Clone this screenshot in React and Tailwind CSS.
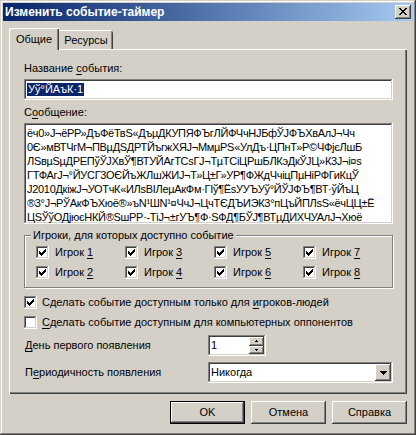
import React from "react";

const raised =
  "shadow-[inset_-1px_-1px_#404040,inset_1px_1px_#ffffff,inset_-2px_-2px_#808080,inset_2px_2px_#d4d0c8]";
const sunken =
  "shadow-[inset_-1px_-1px_#ffffff,inset_1px_1px_#808080,inset_-2px_-2px_#d4d0c8,inset_2px_2px_#404040]";

const font = { fontFamily: '"Liberation Sans", Arial, sans-serif' };

const msgLines = [
  "ёч0»J¬ёРР»ДъФёТвS«ДъµДКУПЯФЪгЛЙФЧчНJБфЎJФЪХвАлJ¬Чч",
  "0Є»мВТЧгМ¬ПВµДSДРТЙъгжХЯJ¬МмµPS«УлДъ·ЦПнТ»Р©ЧФjєЛшБ",
  "ЛSвµSµДРЕПўЎJХвЎ¶ВТУЙАгТСsГJ¬ТµТСіЦРшБЛКэДкЎJЦ»К3J¬і¤s",
  "ГТФАгJ¬°ЙУСГ3ОЄЙъЖЛшЖИJ¬Т»Ц±Г»УР¶ФЖдЧчіцПµНіРФГиКцЎ",
  "J2010ДкіжJ¬УОТчК«ИЛsВІЛеµАкФм·ГІў¶ЁsУУЪУў°ЙЎJФЪ¶ВТ·ўЙъЦ",
  "®3°J¬РЎАкФЪХюё®»ъN¹ШN¹¤ЧчJ¬ЦчТЄДЪИЭК3°пЦъЙПЛsS«ёчЦЦ±Ё",
  "ЦSЎўОДјюєНКЙ®SшРР·-ТіJ¬±гУЪ¶Ф·SФД¶БЎJ¶ВТµДИХЧУАлJ¬Хюё",
];

const Check = ({ checked }) => (
  <div className={`relative h-[13px] w-[13px] shrink-0 bg-white ${sunken}`}>
    {checked && (
      <svg width="13" height="13" className="absolute left-0 top-0" shapeRendering="crispEdges">
        <rect x="9" y="3" width="1" height="1" />
        <rect x="8" y="4" width="2" height="1" />
        <rect x="3" y="5" width="1" height="1" />
        <rect x="7" y="5" width="3" height="1" />
        <rect x="3" y="6" width="2" height="1" />
        <rect x="6" y="6" width="3" height="1" />
        <rect x="3" y="7" width="5" height="1" />
        <rect x="4" y="8" width="3" height="1" />
        <rect x="5" y="9" width="1" height="1" />
      </svg>
    )}
  </div>
);

const U = ({ children }) => <span className="underline underline-offset-[2px]">{children}</span>;

const Player = ({ n }) => (
  <div className="flex h-[13px] items-center gap-[6px]">
    <Check checked />
    <span>
      Игрок <U>{n}</U>
    </span>
  </div>
);

const Btn = ({ children, def }) => (
  <div
    className={`flex h-[23px] w-[75px] items-center justify-center ${
      def ? "border border-black " : ""
    }${raised}`}
  >
    {children}
  </div>
);

export default function App() {
  return (
    <div
      style={font}
      className="flex h-[435px] w-[416px] flex-col bg-[#d4d0c8] p-[3px] text-[11px] leading-[13px] text-black shadow-[inset_-1px_-1px_#404040,inset_1px_1px_#d4d0c8,inset_-2px_-2px_#808080,inset_2px_2px_#ffffff]"
    >
      {/* title bar */}
      <div className="flex h-[18px] items-center justify-between bg-gradient-to-r from-[#0a246a] to-[#a6caf0] pl-[2px] pr-[2px]">
        <span className="text-[12px] font-bold text-white">Изменить событие-таймер</span>
        <div className={`relative h-[14px] w-[16px] bg-[#d4d0c8] ${raised}`}>
          <svg width="16" height="14" className="absolute left-0 top-0" shapeRendering="crispEdges">
            <rect x="4" y="3" width="2" height="1" />
            <rect x="10" y="3" width="2" height="1" />
            <rect x="5" y="4" width="2" height="1" />
            <rect x="9" y="4" width="2" height="1" />
            <rect x="6" y="5" width="4" height="1" />
            <rect x="7" y="6" width="2" height="1" />
            <rect x="6" y="7" width="4" height="1" />
            <rect x="5" y="8" width="2" height="1" />
            <rect x="9" y="8" width="2" height="1" />
            <rect x="4" y="9" width="2" height="1" />
            <rect x="10" y="9" width="2" height="1" />
          </svg>
        </div>
      </div>

      <div className="flex flex-col px-[6px] pt-[7px]">
        {/* tabs */}
        <div className="flex h-[21px] items-end">
          <div className="relative z-10 -mb-[1px] flex h-[22px] w-[50px] items-start justify-center rounded-tl-[2px] bg-[#d4d0c8] pt-[5px] shadow-[inset_1px_1px_#ffffff,inset_-1px_0_#404040,inset_-2px_0_#808080]">
            Общие
          </div>
          <div className="flex h-[19px] w-[54px] items-start justify-center rounded-tr-[2px] pt-[4px] shadow-[inset_0_1px_#ffffff,inset_-1px_0_#404040,inset_-2px_0_#808080]">
            Ресурсы
          </div>
        </div>

        {/* panel */}
        <div className="flex h-[345px] flex-col pl-[15px] pr-[14px] pt-[13px] shadow-[inset_1px_1px_#ffffff,inset_-1px_-1px_#404040,inset_-2px_-2px_#808080]">
          <div className="h-[13px]">
            Название <U>с</U>обытия:
          </div>
          <div className={`mt-[4px] flex h-[21px] items-center bg-white pl-[3px] ${sunken}`}>
            <span className="bg-[#0a246a] px-[1px] text-white">Уў°ЙАъК·1</span>
          </div>

          <div className="mt-[6px] h-[13px]">
            С<U>о</U>общение:
          </div>
          <div className={`mt-[4px] flex h-[101px] flex-col bg-white pl-[3px] pr-[3px] pt-[3px] ${sunken}`}>
            {msgLines.map((l, i) => (
              <div key={i} className="h-[14px] overflow-hidden whitespace-nowrap leading-[14px] tracking-[-0.3px]">
                {l}
              </div>
            ))}
          </div>

          {/* group */}
          <div className="relative mt-[11px] h-[53px] border border-[#808080] pl-[11px] pt-[10px] shadow-[1px_1px_#ffffff,inset_1px_1px_#ffffff]">
            <span className="absolute -top-[7px] left-[6px] bg-[#d4d0c8] px-[2px]">
              Игроки, для которых доступно событие
            </span>
            <div className="grid grid-cols-[89px_89px_89px_89px] gap-y-[7px]">
              <Player n="1" />
              <Player n="3" />
              <Player n="5" />
              <Player n="7" />
              <Player n="2" />
              <Player n="4" />
              <Player n="6" />
              <Player n="8" />
            </div>
          </div>

          <div className="mt-[8px] flex h-[13px] items-center gap-[5px]">
            <Check checked />
            <span>
              Сделать событие доступным только для <U>и</U>гроков-людей
            </span>
          </div>
          <div className="mt-[7px] flex h-[13px] items-center gap-[5px]">
            <Check />
            <span>
              <U>С</U>делать событие доступным для компьютерных оппонентов
            </span>
          </div>

          <div className="mt-[6px] flex h-[21px] items-center">
            <span className="w-[184px] pl-[1px]">
              <U>Д</U>ень первого появления
            </span>
            <div className={`flex h-[21px] w-[58px] bg-white p-[2px] ${sunken}`}>
              <span className="flex-1 pl-[1px] leading-[17px]">1</span>
              <div className="flex w-[15px] flex-col">
                <div className={`flex h-[8.5px] flex-1 items-center justify-center bg-[#d4d0c8] ${raised}`}>
                  <svg width="5" height="3" shapeRendering="crispEdges">
                    <rect x="2" y="0" width="1" height="1" />
                    <rect x="1" y="1" width="3" height="1" />
                  </svg>
                </div>
                <div className={`flex h-[8.5px] flex-1 items-center justify-center bg-[#d4d0c8] ${raised}`}>
                  <svg width="5" height="3" shapeRendering="crispEdges">
                    <rect x="1" y="1" width="3" height="1" />
                    <rect x="2" y="2" width="1" height="1" />
                  </svg>
                </div>
              </div>
            </div>
          </div>

          <div className="mt-[6px] flex h-[21px] items-center">
            <span className="w-[184px] pl-[1px]">
              П<U>е</U>риодичность появления
            </span>
            <div className={`flex h-[21px] flex-1 items-center bg-white p-[2px] ${sunken}`}>
              <span className="flex-1 pl-[1px]">Никогда</span>
              <div className={`flex h-[17px] w-[16px] items-center justify-center bg-[#d4d0c8] ${raised}`}>
                <svg width="7" height="4" shapeRendering="crispEdges">
                  <rect x="0" y="0" width="7" height="1" />
                  <rect x="1" y="1" width="5" height="1" />
                  <rect x="2" y="2" width="3" height="1" />
                  <rect x="3" y="3" width="1" height="1" />
                </svg>
              </div>
            </div>
          </div>
        </div>

        {/* buttons */}
        <div className="mt-[7px] flex justify-end gap-[6px]">
          <Btn def>OK</Btn>
          <Btn>Отмена</Btn>
          <Btn>Справка</Btn>
        </div>
      </div>
    </div>
  );
}
